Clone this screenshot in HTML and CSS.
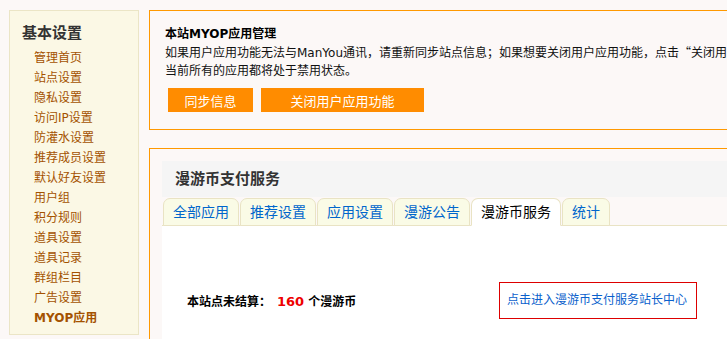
FILE: index.html
```html
<!DOCTYPE html>
<html lang="zh-CN">
<head>
    <meta charset="UTF-8">
    <title>MYOP应用</title>
    <link rel="stylesheet" href="styles.css">
</head>
<body>
    <div class="wrap">

        <!-- Side menu -->
        <div class="side">
            <h2>基本设置</h2>
            <ul class="menu">
                <li><a href="#">管理首页</a></li>
                <li><a href="#">站点设置</a></li>
                <li><a href="#">隐私设置</a></li>
                <li><a href="#">访问IP设置</a></li>
                <li><a href="#">防灌水设置</a></li>
                <li><a href="#">推荐成员设置</a></li>
                <li><a href="#">默认好友设置</a></li>
                <li><a href="#">用户组</a></li>
                <li><a href="#">积分规则</a></li>
                <li><a href="#">道具设置</a></li>
                <li><a href="#">道具记录</a></li>
                <li><a href="#">群组栏目</a></li>
                <li><a href="#">广告设置</a></li>
                <li class="current"><a href="#">MYOP应用</a></li>
            </ul>
        </div>

        <div class="main">
            <!-- MYOP notice -->
            <div class="panel notice">
                <h3>本站MYOP应用管理</h3>
                <p>如果用户应用功能无法与ManYou通讯，请重新同步站点信息；如果想要关闭用户应用功能，点击<span class="cjk">“</span>关闭用户应用功能<span class="cjk">”</span>按钮，<br>当前所有的应用都将处于禁用状态。</p>
                <div class="btns">
                    <button class="btn btn-sync">同步信息</button>
                    <button class="btn btn-close">关闭用户应用功能</button>
                </div>
            </div>

            <!-- Pay service -->
            <div class="panel pay">
                <div class="pay-head">漫游币支付服务</div>
                <div class="tabs">
                    <a href="#" class="tab">全部应用</a>
                    <a href="#" class="tab">推荐设置</a>
                    <a href="#" class="tab">应用设置</a>
                    <a href="#" class="tab">漫游公告</a>
                    <a href="#" class="tab active">漫游币服务</a>
                    <a href="#" class="tab">统计</a>
                </div>
                <div class="pay-body">
                    <div class="pay-row">
                        <div class="balance">本站点未结算：<span class="num">160</span> 个漫游币</div>
                        <a href="#" class="center-link">点击进入漫游币支付服务站长中心</a>
                    </div>
                </div>
            </div>
        </div>

    </div>
</body>
</html>
```

FILE: styles.css
```css
* {
    margin: 0;
    padding: 0;
    box-sizing: border-box;
}
body {
    background: #fcf8f7;
    color: #222;
    font-family: "DejaVu Sans", "Noto Sans CJK SC", sans-serif;
    font-size: 12px;
    overflow: hidden;
}
a {
    text-decoration: none;
}
.cjk {
    font-family: "Noto Sans CJK SC", sans-serif;
}
.wrap {
    display: flex;
    align-items: flex-start;
    gap: 10px;
    width: 820px;
    padding: 10px 0 0 9px;
}

/* side menu */
.side {
    width: 130px;
    flex-shrink: 0;
    background: #fbf8e5;
    border: 1px solid #ebe5c6;
    padding: 12px 0 6px 12px;
}
.side h2 {
    font-size: 15px;
    line-height: 20px;
    color: #333;
    margin-bottom: 5px;
}
.menu {
    list-style: none;
    padding-left: 12px;
}
.menu li {
    line-height: 20px;
}
.menu a {
    color: #a45200;
}
.menu .current a {
    font-weight: bold;
}

/* panels */
.main {
    flex: 1;
}
.panel {
    border: 1px solid #ff9900;
}
.notice {
    padding: 14px 15px 17px;
    height: 120px;
    white-space: nowrap;
    overflow: hidden;
}
.notice h3 {
    font-size: 12px;
    line-height: 18px;
    color: #000;
}
.notice p {
    line-height: 18px;
    color: #111;
}
.btns {
    display: flex;
    gap: 8px;
    margin: 8px 0 0 3px;
}
.btn {
    height: 24px;
    border: none;
    background: #ff8c00;
    color: #fff;
    font-family: inherit;
    font-size: 13px;
}
.btn-sync {
    width: 85px;
}
.btn-close {
    width: 163px;
}

.pay {
    margin-top: 18px;
    padding: 12px 0 0 12px;
    height: 200px;
}
.pay-head {
    background: #f5f5f5;
    height: 36px;
    line-height: 36px;
    padding-left: 13px;
    font-size: 15px;
    font-weight: bold;
    color: #333;
}
.tabs {
    display: flex;
    gap: 1px;
    padding-left: 1px;
    border-bottom: 1px solid #e9e3c4;
}
.tab {
    margin-top: 1px;
    margin-bottom: -1px;
    height: 28px;
    line-height: 27px;
    padding: 0 9px;
    font-size: 14px;
    color: #0066cc;
    background: #fafbe6;
    border: 1px solid #e9e3c4;
    border-radius: 7px 7px 0 0;
}
.tab.active {
    background: #fff;
    color: #000;
    border-bottom-color: #fff;
}
.pay-body {
    background: #fff;
    height: 140px;
    padding: 56px 0 0 25px;
}
.pay-row {
    display: flex;
    align-items: center;
}
.balance {
    width: 312px;
    font-weight: bold;
    color: #000;
}
.num {
    color: #ee0000;
    font-size: 13px;
    margin-left: 6px;
}
.center-link {
    width: 198px;
    height: 37px;
    line-height: 35px;
    padding-left: 7px;
    border: 1px solid #dd0000;
    color: #0a5fcc;
}
```
